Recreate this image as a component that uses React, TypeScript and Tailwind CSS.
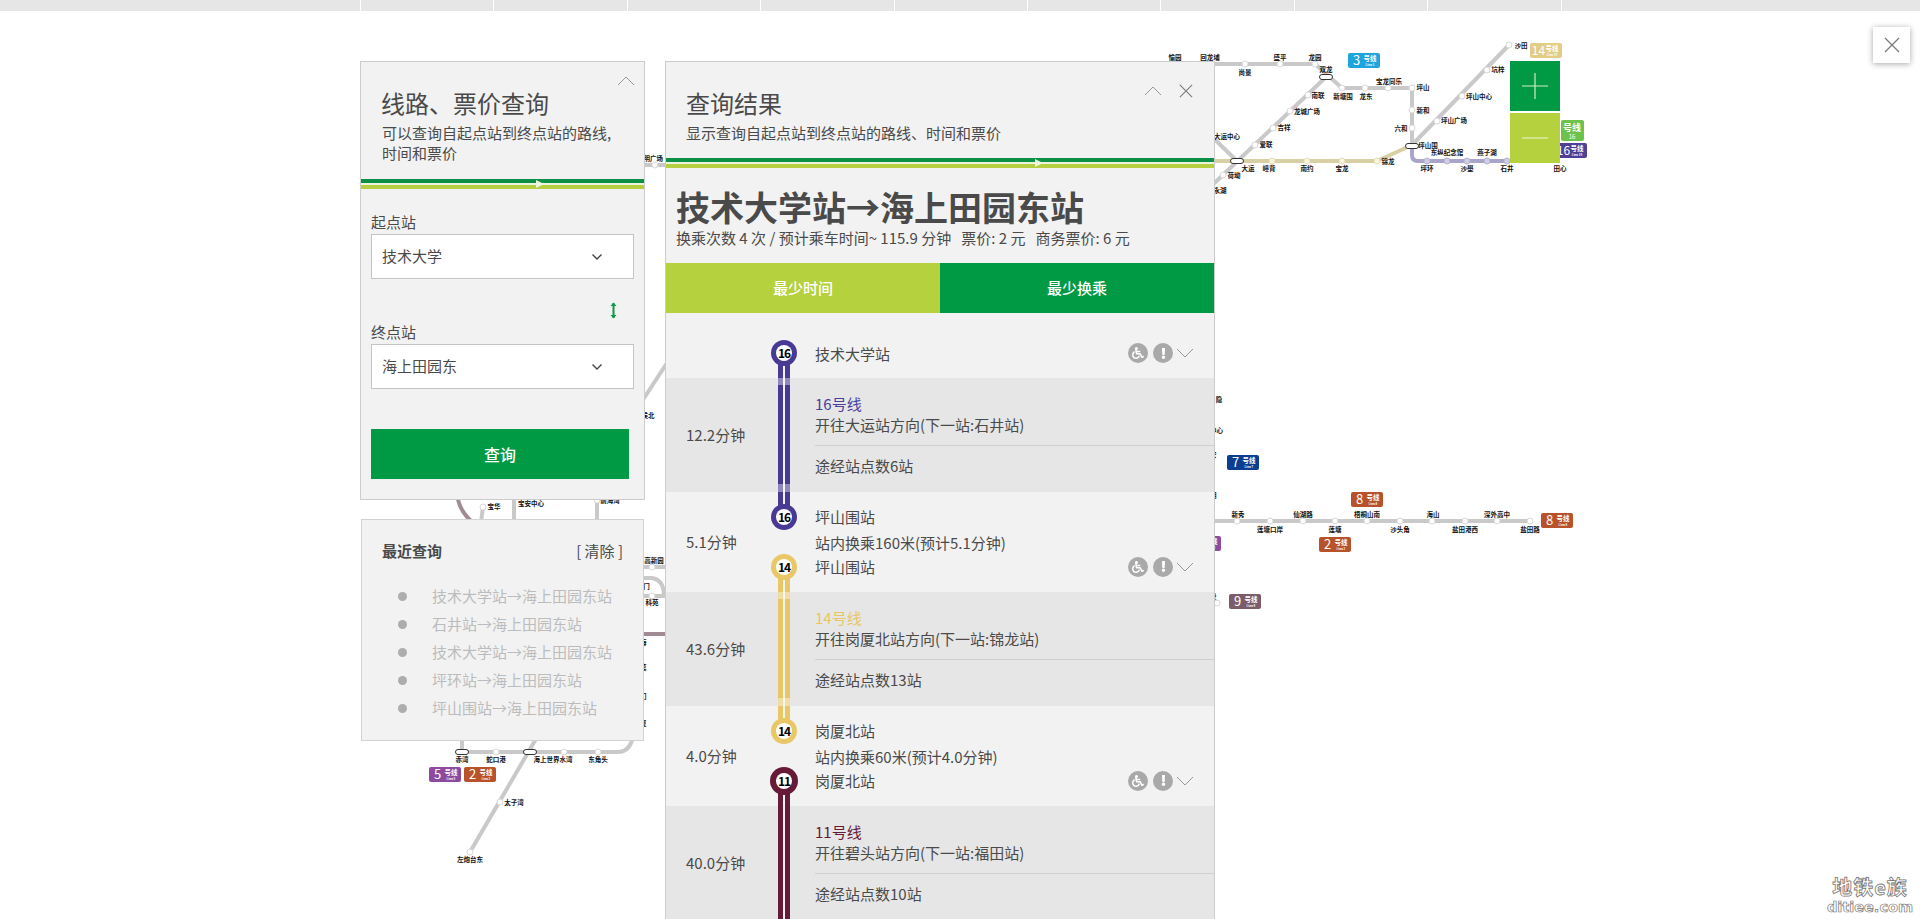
import React from "react";
import { FaWheelchair, FaExclamation } from "react-icons/fa";

const GRAY = "#c9c9c9";

type P = [number, number];
const paths: { d: string; c: string }[] = [
  { d: "M1200 64H1315L1342 88H1412V145", c: GRAY },
  { d: "M1205 192L1326 77", c: GRAY },
  { d: "M1205 130L1237 161", c: GRAY },
  { d: "M1412 145L1509 45", c: GRAY },
  { d: "M1200 161H1377L1412 145", c: "#d8d0a4" },
  { d: "M1412 145V155Q1412 161 1418 161H1550", c: "#a8a4ca" },
  { d: "M1200 521H1530", c: GRAY },
  { d: "M440 165H680", c: GRAY },
  { d: "M680 343L620 435", c: GRAY },
  { d: "M457 480V492Q458 512 476 525", c: "#a08a94" },
  { d: "M483 507L480 530", c: GRAY },
  { d: "M514 490V530", c: GRAY },
  { d: "M597 490V530", c: GRAY },
  { d: "M630 567H680", c: GRAY },
  { d: "M630 596H680", c: GRAY },
  { d: "M640 578H652Q664 580 664 596", c: GRAY },
  { d: "M630 634H680", c: "#a08a94" },
  { d: "M462 730V752H618Q632 752 634 730", c: GRAY },
  { d: "M540 732L470 852", c: GRAY },
];

const stations: P[] = [
  [1245, 64], [1280, 64], [1315, 64], [1342, 88], [1365, 88], [1388, 88], [1412, 88], [1412, 110], [1412, 128],
  [1308, 95], [1290, 111], [1273, 128], [1255, 145], [1223, 175], [1437, 121], [1462, 96], [1487, 70], [1509, 45],
  [1237, 521], [1270, 521], [1303, 521], [1335, 521], [1367, 521], [1400, 521], [1432, 521], [1465, 521], [1497, 521], [1530, 521],
  [655, 165], [483, 507], [597, 500], [652, 567], [652, 596], [1217, 603], [496, 752], [564, 752], [598, 752], [500, 802], [470, 852],
];
const tanStations: P[] = [[1272, 161], [1307, 161], [1342, 161], [1377, 161]];
const purpleStations: P[] = [[1427, 161], [1447, 161], [1467, 161], [1487, 161], [1507, 161]];
const pills: P[] = [[1237, 161], [1326, 77], [1412, 146], [462, 752], [530, 752]];

const labels: [string, number, number][] = [
  ["愉园", 1175, 60], ["回龙埔", 1210, 60], ["尚景", 1245, 75], ["盛平", 1280, 60], ["龙园", 1315, 60],
  ["双龙", 1326, 72], ["南联", 1318, 98], ["龙城广场", 1307, 114], ["吉祥", 1284, 130], ["爱联", 1266, 147],
  ["大运中心", 1227, 139], ["大运", 1248, 171], ["荷坳", 1234, 178], ["永湖", 1220, 193], ["嶂背", 1269, 171],
  ["南约", 1307, 171], ["宝龙", 1342, 171], ["锦龙", 1388, 164], ["坪环", 1427, 171], ["沙壆", 1467, 171],
  ["石井", 1507, 171], ["田心", 1560, 171], ["东纵纪念馆", 1447, 155], ["燕子湖", 1487, 155], ["坪山围", 1428, 148],
  ["坪山广场", 1454, 123], ["坪山中心", 1479, 99], ["坑梓", 1498, 72], ["沙田", 1521, 48], ["六和", 1401, 131],
  ["新和", 1423, 113], ["坪山", 1423, 90], ["宝龙同乐", 1389, 84], ["新塘围", 1343, 99], ["龙东", 1366, 99],
  ["新秀", 1238, 517], ["仙湖路", 1303, 517], ["梧桐山南", 1367, 517], ["海山", 1433, 517], ["深外高中", 1497, 517],
  ["莲塘口岸", 1270, 532], ["莲塘", 1335, 532], ["沙头角", 1400, 532], ["盐田港西", 1465, 532], ["盐田路", 1530, 532],
  ["公明广场", 650, 161], ["侯北", 648, 418], ["宝华", 494, 509], ["宝安中心", 531, 506], ["前海湾", 610, 503],
  ["高新园", 654, 563], ["深大门", 640, 589], ["科苑", 652, 605], ["南海", 640, 645], ["后莫", 640, 670], ["口门", 640, 699], ["华夏", 640, 726],
  ["大运中心", 1210, 433], ["长安", 1210, 457], ["新湖", 1210, 498], ["大锋", 1210, 599], ["赤湾", 462, 762], ["蛇口港", 496, 762],
  ["海上世界水湾", 553, 762], ["东角头", 598, 762], ["太子湾", 514, 805], ["左炮台东", 470, 862], ["隐", 1219, 402],
];

const badges: [string, number, number, string][] = [
  ["3", 1348, 53, "#1ea5dd"], ["14", 1530, 43, "#e2cd85"], ["16", 1555, 143, "#4f3f97"], ["7", 1227, 455, "#0b3d91"],
  ["8", 1351, 492, "#b7522a"], ["2", 1319, 537, "#b7522a"], ["8", 1541, 513, "#b7522a"], ["5", 1189, 536, "#8e4a9e"],
  ["9", 1229, 594, "#7b5c6a"], ["5", 429, 767, "#8e4a9e"], ["2", 464, 767, "#b7522a"],
];

function MetroMap() {
  return (
    <svg className="absolute inset-0" width="1920" height="919" viewBox="0 0 1920 919" fill="none">
      {paths.map((p, i) => (
        <path key={i} d={p.d} stroke={p.c} strokeWidth="4" strokeLinejoin="round" />
      ))}
      {stations.map(([x, y], i) => (
        <circle key={i} cx={x} cy={y} r="3" fill="#fff" stroke="#d8d8d8" strokeWidth="1" />
      ))}
      {tanStations.map(([x, y], i) => (
        <circle key={i} cx={x} cy={y} r="3" fill="#f9f5dd" stroke="#e4ddbb" strokeWidth="1" />
      ))}
      {purpleStations.map(([x, y], i) => (
        <circle key={i} cx={x} cy={y} r="3" fill="#cfcde4" stroke="#b5b2d4" strokeWidth="1" />
      ))}
      {pills.map(([x, y], i) => (
        <rect key={i} x={x - 6.5} y={y - 2.5} width="13" height="5" rx="2.5" fill="#fff" stroke="#333" strokeWidth="1" />
      ))}
      {labels.map(([t, x, y], i) => (
        <text key={i} x={x} y={y} textAnchor="middle" fontSize="6.5" fontWeight="700" fill="#111">
          {t}
        </text>
      ))}
      <rect x="1561" y="120" width="23" height="21" rx="2" fill="#6cc24a" />
      <text x="1572" y="131" textAnchor="middle" fontSize="9" fontWeight="700" fill="#fff">号线</text>
      <text x="1572" y="139" textAnchor="middle" fontSize="6" fill="#fff">16</text>
      {badges.map(([n, x, y, c], i) => (
        <g key={i}>
          <rect x={x} y={y} width="32" height="15" rx="2" fill={c} />
          <text x={x + 8.5} y={y + 12} textAnchor="middle" fontSize={n.length > 1 ? 12 : 13} fill="#fff">{n}</text>
          <text x={x + 22} y={y + 7.5} textAnchor="middle" fontSize="6.5" fontWeight="700" fill="#fff">号线</text>
          <text x={x + 22} y={y + 12.5} textAnchor="middle" fontSize="3" fontWeight="700" fill="#fff">{`Line ${n}`}</text>
        </g>
      ))}
    </svg>
  );
}

function Chevron({ up = false, className = "" }: { up?: boolean; className?: string }) {
  return (
    <svg className={className} width="18" height="10" viewBox="0 0 18 10" fill="none">
      <path d={up ? "M1 9L9 1L17 9" : "M1 1L9 9L17 1"} stroke="#999" strokeWidth="1" />
    </svg>
  );
}

function SmallChevron() {
  return (
    <svg width="12" height="8" viewBox="0 0 12 8" fill="none">
      <path d="M1.5 1.5L6 6L10.5 1.5" stroke="#444" strokeWidth="1.4" />
    </svg>
  );
}

function Cross({ size, color }: { size: number; color: string }) {
  return (
    <svg width={size} height={size} viewBox="0 0 16 16" fill="none">
      <path d="M1 1L15 15M15 1L1 15" stroke={color} strokeWidth="1.2" />
    </svg>
  );
}

function Stripes({ arrowClass }: { arrowClass: string }) {
  return (
    <div className="relative bg-[#edf4dc]">
      <div className="h-[4px] bg-[#0e8f46]" />
      <div className="h-[2px]" />
      <div className="h-[4px] bg-[#b6cf42]" />
      <svg className={arrowClass} width="8" height="8" viewBox="0 0 8 8">
        <path d="M0 0L8 4L0 8Z" fill="#eef6de" />
      </svg>
    </div>
  );
}

function SelectBox({ value }: { value: string }) {
  return (
    <div className="flex h-[45px] w-[263px] items-center justify-between border border-[#c4c4c4] bg-white pl-[10px] pr-[30px] text-[15px] text-[#4a4a4a]">
      <span>{value}</span>
      <SmallChevron />
    </div>
  );
}

function Icons() {
  return (
    <div className="flex items-center pr-[20px]">
      <span className="flex h-[20px] w-[20px] items-center justify-center rounded-full bg-[#a9a9a9] text-white">
        <FaWheelchair size={12} />
      </span>
      <span className="ml-[5px] flex h-[20px] w-[20px] items-center justify-center rounded-full bg-[#a9a9a9] text-white">
        <FaExclamation size={11} />
      </span>
      <Chevron className="ml-[3px]" />
    </div>
  );
}

function LegRow({ time, name, nameClass, dir, count }: { time: string; name: string; nameClass: string; dir: string; count: string }) {
  return (
    <div className="flex h-[114px] bg-[#e6e6e6] text-[15px] text-[#4a4a4a]">
      <div className="flex w-[149px] items-center pl-[20px]">{time}</div>
      <div className="flex-1 pt-[15px] leading-[22px]">
        <div className={nameClass}>{name}</div>
        <div className="-mt-px">{dir}</div>
        <div className="mt-[9px] border-t border-[#cfcfcf] pt-[9px]">{count}</div>
      </div>
    </div>
  );
}

function TransferRow({ time, from, note, to }: { time: string; from: string; note: string; to: string }) {
  return (
    <div className="flex h-[100px] bg-[#f2f2f2] text-[15px] text-[#4a4a4a]">
      <div className="flex w-[149px] items-center pl-[20px]">{time}</div>
      <div className="flex-1 pt-[12px] leading-[25px]">
        <div>{from}</div>
        <div className="mt-px">{note}</div>
        <div className="-mt-px flex items-center justify-between">
          <span>{to}</span>
          <Icons />
        </div>
      </div>
    </div>
  );
}

function RouteLine({ className, bandTop, bandBottom }: { className: string; bandTop?: string; bandBottom?: string }) {
  return (
    <div className={`absolute left-[112px] w-[12px] ${className}`}>
      <div className="absolute inset-y-0 left-[5px] w-[2px] bg-[#f2f2f2]" />
      {bandTop && <div className={`absolute inset-x-0 h-[7px] bg-white/40 ${bandTop}`} />}
      {bandBottom && <div className={`absolute inset-x-0 h-[8px] bg-white/40 ${bandBottom}`} />}
    </div>
  );
}

function Node({ label, className }: { label: string; className: string }) {
  return (
    <div className={`absolute flex items-center justify-center rounded-full ${className}`}>
      <span className="flex h-[16px] w-[16px] items-center justify-center rounded-full bg-white text-[12px] font-bold tracking-[-1px] text-black">
        {label}
      </span>
    </div>
  );
}

export default function App() {
  return (
    <div className="relative h-[919px] w-[1920px] overflow-hidden bg-white font-['Noto_Sans_CJK_SC',sans-serif]">
      <MetroMap />

      <div className="relative flex h-[11px] bg-[#e6e6e6]">
        <div className="w-[360px]" />
        {Array.from({ length: 9 }, (_, i) => (
          <div key={i} className="w-[133.4px] border-l border-white" />
        ))}
        <div className="flex-1 border-l border-white" />
      </div>

      <div className="relative flex items-start pl-[360px] pt-[50px]">
        <div className="w-[285px]">
          <section className="relative h-[439px] border border-[#cccccc] bg-[#f2f2f2]">
            <Chevron up className="absolute right-[9px] top-[14px]" />
            <div className="pl-[21px] pr-[20px] pt-[25px] text-[#4a4a4a]">
              <h2 className="-ml-px text-[24px] font-normal leading-[32px]">线路、票价查询</h2>
              <p className="mt-[4px] text-[15px] leading-[20px]">可以查询自起点站到终点站的路线,<br />时间和票价</p>
            </div>
            <div className="mt-[16px]">
              <Stripes arrowClass="absolute left-[175px] top-[1px]" />
            </div>
            <div className="px-[10px] text-[15px] text-[#4a4a4a]">
              <div className="mb-px mt-[22px] leading-[22px]">起点站</div>
              <SelectBox value="技术大学" />
              <div className="flex h-[42px] w-[263px] items-start justify-end pr-[17px] pt-[23px]">
                <svg width="7" height="17" viewBox="0 0 7 17" fill="none">
                  <path d="M3.5 1V16" stroke="#0e9a48" strokeWidth="2" />
                  <path d="M0.5 4L3.5 0.5L6.5 4ZM0.5 13L3.5 16.5L6.5 13Z" fill="#0e9a48" />
                </svg>
              </div>
              <div className="mb-px leading-[22px]">终点站</div>
              <SelectBox value="海上田园东" />
              <button className="mt-[40px] block h-[50px] w-[258px] bg-[#009a44] text-[16px] font-medium text-white">查询</button>
            </div>
          </section>

          <section className="ml-px mt-[19px] h-[222px] w-[283px] border border-[#d2d2d2] bg-[#f2f2f2] pl-[20px] pr-[20px] pt-[20px]">
            <div className="flex justify-between text-[15px] leading-[22px] text-[#4a4a4a]">
              <span className="font-bold">最近查询</span>
              <span>[ 清除 ]</span>
            </div>
            <ul className="mt-[20px] text-[15px] leading-[28px] text-[#bcbcbc]">
              {["技术大学站→海上田园东站", "石井站→海上田园东站", "技术大学站→海上田园东站", "坪环站→海上田园东站", "坪山围站→海上田园东站"].map((t, i) => (
                <li key={i} className="flex items-center">
                  <span className="ml-[16px] mr-[25px] h-[9px] w-[9px] rounded-full bg-[#adadad]" />
                  {t}
                </li>
              ))}
            </ul>
          </section>
        </div>

        <section className="relative ml-[20px] h-[858px] w-[550px] overflow-hidden border-x border-t border-[#cccccc] bg-[#f2f2f2] text-[#4a4a4a]">
          <div className="absolute right-[21px] top-[22px] flex items-center gap-[17px]">
            <Chevron up />
            <Cross size={14} color="#777" />
          </div>
          <div className="pl-[20px] pt-[25px]">
            <h2 className="text-[24px] font-normal leading-[32px]">查询结果</h2>
            <p className="mt-[3px] text-[15px] leading-[22px]">显示查询自起点站到终点站的路线、时间和票价</p>
          </div>
          <div className="mt-[14px]">
            <Stripes arrowClass="absolute left-[369px] top-[1px]" />
          </div>
          <div className="pl-[10px]">
            <h1 className="mt-[18px] text-[34px] font-bold leading-[41px]">技术大学站→海上田园东站</h1>
            <p className="whitespace-pre text-[15px] leading-[22px]">换乘次数 4 次 / 预计乘车时间~ 115.9 分钟   票价: 2 元   商务票价: 6 元</p>
          </div>
          <div className="mt-[14px] flex h-[50px] text-[15px] font-medium text-white">
            <div className="flex flex-1 items-center justify-center bg-[#b6d13e]">最少时间</div>
            <div className="flex flex-1 items-center justify-center bg-[#009a44]">最少换乘</div>
          </div>

          <div className="relative">
            <div className="flex h-[65px] bg-[#f2f2f2] text-[15px] leading-[25px]">
              <div className="w-[149px]" />
              <div className="flex flex-1 items-center justify-between pt-[15px]">
                <span>技术大学站</span>
                <Icons />
              </div>
            </div>
            <LegRow time="12.2分钟" name="16号线" nameClass="text-[#4b3f9a]" dir="开往大运站方向(下一站:石井站)" count="途经站点数6站" />
            <TransferRow time="5.1分钟" from="坪山围站" note="站内换乘160米(预计5.1分钟)" to="坪山围站" />
            <LegRow time="43.6分钟" name="14号线" nameClass="text-[#e8c763]" dir="开往岗厦北站方向(下一站:锦龙站)" count="途经站点数13站" />
            <TransferRow time="4.0分钟" from="岗厦北站" note="站内换乘60米(预计4.0分钟)" to="岗厦北站" />
            <LegRow time="40.0分钟" name="11号线" nameClass="text-[#661a38]" dir="开往碧头站方向(下一站:福田站)" count="途经站点数10站" />

            <RouteLine className="top-[40px] h-[164px] bg-[#483a94]" bandTop="top-[25px]" bandBottom="top-[131px]" />
            <RouteLine className="top-[254px] h-[164px] bg-[#e9c766]" bandTop="top-[25px]" bandBottom="top-[131px]" />
            <RouteLine className="top-[468px] h-[140px] bg-[#661a38]" />
            <Node label="16" className="left-[105px] top-[27px] h-[26px] w-[26px] bg-[#483a94]" />
            <Node label="16" className="left-[105px] top-[191px] h-[26px] w-[26px] bg-[#483a94]" />
            <Node label="14" className="left-[105px] top-[241px] h-[26px] w-[26px] bg-[#e9c766]" />
            <Node label="14" className="left-[105px] top-[405px] h-[26px] w-[26px] bg-[#e9c766]" />
            <Node label="11" className="left-[104px] top-[454px] h-[28px] w-[28px] bg-[#661a38]" />
          </div>
        </section>

        <div className="ml-[295px] w-[50px]">
          <div className="flex h-[50px] items-center justify-center bg-[#009a44]">
            <svg width="26" height="26" viewBox="0 0 26 26" fill="none">
              <path d="M13 0V26M0 13H26" stroke="#d6ecc4" strokeWidth="1.2" />
            </svg>
          </div>
          <div className="mt-[2px] flex h-[50px] items-center justify-center bg-[#b6d13e]">
            <svg width="26" height="2" viewBox="0 0 26 2" fill="none">
              <path d="M0 1H26" stroke="#e6f0c0" strokeWidth="1.2" />
            </svg>
          </div>
        </div>
      </div>

      <button className="absolute left-[1873px] top-[27px] flex h-[36px] w-[37px] items-center justify-center bg-white shadow-[0_1px_6px_rgba(0,0,0,0.35)]">
        <Cross size={16} color="#777" />
      </button>

      <svg className="absolute bottom-0 right-0" width="100" height="44" viewBox="0 0 100 44">
        <text x="50" y="20" textAnchor="middle" fontSize="20" letterSpacing="1" fontWeight="700" fill="#fff" stroke="#777" strokeWidth="0.8" fontFamily="'Noto Sans CJK SC', sans-serif">地铁e族</text>
        <text x="50" y="37" textAnchor="middle" fontSize="14.5" fontWeight="700" fill="#fff" stroke="#777" strokeWidth="0.7" fontFamily="'DejaVu Sans', sans-serif">ditiee.com</text>
      </svg>
    </div>
  );
}
